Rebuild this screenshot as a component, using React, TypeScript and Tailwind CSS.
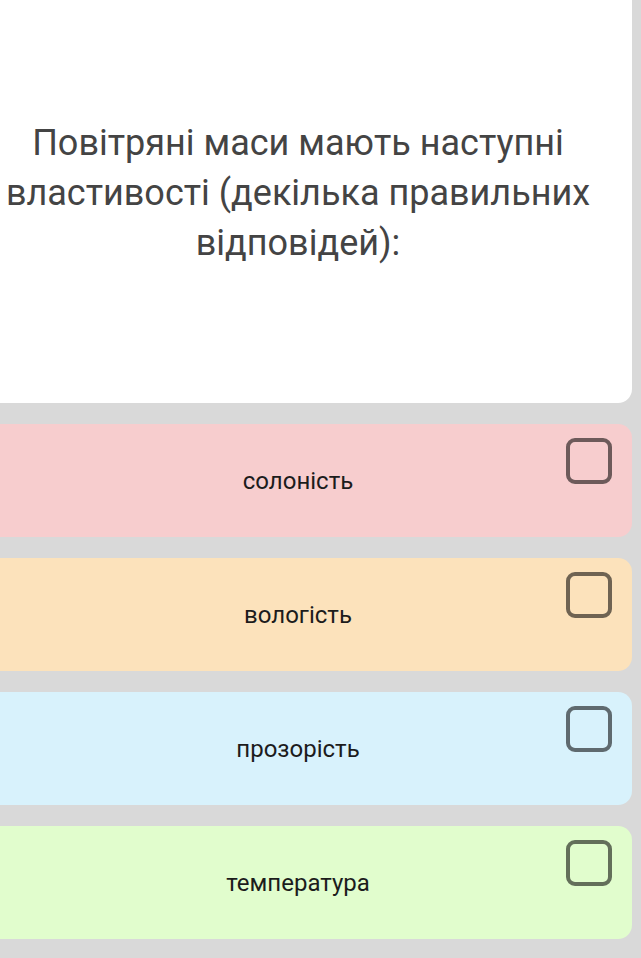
const options = [
  { id: 1, label: 'солоність', color: 'bg-[#f7cdce]' },
  { id: 2, label: 'вологість', color: 'bg-[#fce2bb]' },
  { id: 3, label: 'прозорість', color: 'bg-[#d8f2fc]' },
  { id: 4, label: 'температура', color: 'bg-[#e1fdcd]' },
]

export default function App() {
  return (
    <div className="min-h-screen bg-[#d9d9d9] pr-[9px] pb-[19px] font-['Roboto','Noto_Sans',sans-serif]">
      {/* Question */}
      <div className="h-[403px] bg-white rounded-br-[14px] pr-[36px] pt-[118px]">
        <p className="text-center text-[36px] leading-[50px] text-[#444444]">
          Повітряні маси мають наступні властивості (декілька правильних відповідей):
        </p>
      </div>

      {/* Options */}
      <div className="mt-[21px] flex flex-col gap-[21px]">
        {options.map((o) => (
          <div
            key={o.id}
            className={`relative h-[113px] rounded-r-[14px] ${o.color} flex items-center`}
          >
            <span className="w-[596px] text-center text-[24px] text-[#1c1c1c]">{o.label}</span>
            <div className="absolute right-[20px] top-[14px] w-[46px] h-[46px] rounded-[9px] border-[4px] border-[rgba(0,0,0,0.56)]" />
          </div>
        ))}
      </div>
    </div>
  )
}
